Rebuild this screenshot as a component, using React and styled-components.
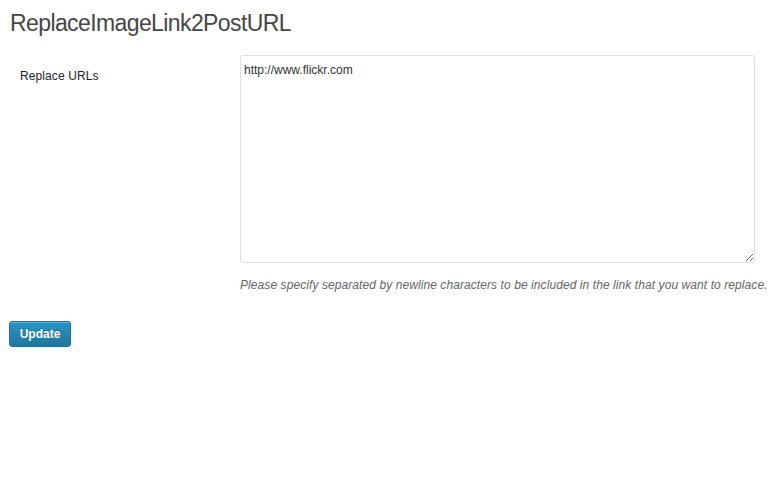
import React from "react";
import styled, { createGlobalStyle } from "styled-components";

const Global = createGlobalStyle`
  html, body { margin: 0; padding: 0; background: #fff; }
  body { font-family: "Liberation Sans", Arial, sans-serif; color: #333; }
`;

const Wrap = styled.div`
  padding: 0 10px;
`;

const Title = styled.h2`
  margin: 0;
  padding: 9px 0 0 0;
  font-family: "Liberation Sans", Arial, sans-serif;
  font-weight: normal;
  font-size: 23px;
  line-height: 29px;
  color: #464646;
  letter-spacing: -0.6px;
`;

const Row = styled.div`
  display: grid;
  grid-template-columns: 230px 1fr;
  margin-top: 17px;
`;

const Label = styled.label`
  padding: 13px 0 0 10px;
  font-size: 12px;
  line-height: 16px;
  color: #222;
  letter-spacing: 0.1px;
`;

const Field = styled.div`
  display: flex;
  flex-direction: column;
`;

const TextArea = styled.textarea`
  box-sizing: border-box;
  width: 515px;
  height: 208px;
  border: 1px solid #dfdfdf;
  border-radius: 3px;
  padding: 6px 3px;
  font-family: "Liberation Sans", Arial, sans-serif;
  font-size: 12px;
  line-height: 16px;
  color: #333;
  resize: both;
  outline: none;
  margin: 0;
`;

const Desc = styled.p`
  margin: 14px 0 0 0;
  font-size: 12px;
  line-height: 16px;
  font-style: italic;
  color: #666;
  white-space: nowrap;
  letter-spacing: 0.08px;
`;

const Button = styled.button`
  margin-top: 28px;
  box-sizing: border-box;
  width: 62px;
  height: 26px;
  margin-left: -1px;
  border: 1px solid #21759b;
  border-radius: 3px;
  background: linear-gradient(to bottom, #2a95c5, #21759b);
  color: #fff;
  font-family: "Liberation Sans", Arial, sans-serif;
  font-weight: bold;
  font-size: 12px;
  padding: 0;
  box-shadow: inset 0 1px 0 rgba(120, 200, 230, 0.5);
  text-shadow: 0 -1px 0 rgba(0, 0, 0, 0.2);
  cursor: pointer;
`;

export default function App() {
  return (
    <Wrap>
      <Global />
      <Title>ReplaceImageLink2PostURL</Title>
      <Row>
        <Label>Replace URLs</Label>
        <Field>
          <TextArea defaultValue="http://www.flickr.com" />
          <Desc>
            Please specify separated by newline characters to be included in
            the link that you want to replace.
          </Desc>
        </Field>
      </Row>
      <Button>Update</Button>
    </Wrap>
  );
}
